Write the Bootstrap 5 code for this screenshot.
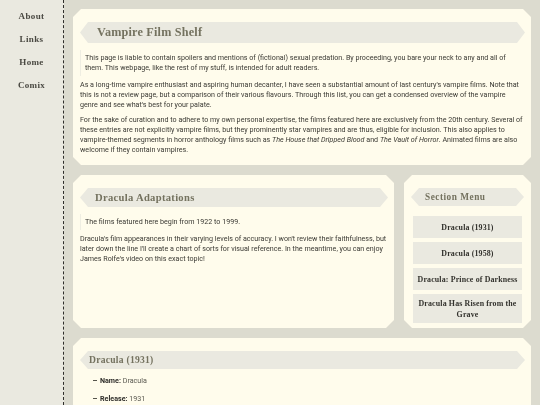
<!DOCTYPE html>
<html lang="en">
<head>
  <meta charset="UTF-8">
  <meta name="viewport" content="width=device-width, initial-scale=1.0">
  <link rel="stylesheet" href="https://cdn.jsdelivr.net/npm/bootstrap@5.3.6/dist/css/bootstrap.min.css">
  <script src="https://cdn.jsdelivr.net/npm/bootstrap@5.3.6/dist/js/bootstrap.bundle.min.js" defer></script>
  <title>Vampire Film Shelf</title>
  <style>
    html, body { height: 405px; overflow: hidden; }
    body { background: #dcdbcf; font-family: Roboto, "Liberation Sans", sans-serif; font-size: 7.15px; line-height: 9.9px; color: #3a3933; }
    .side-menu { width: 64px; height: 405px; flex: none; background: #eae9e0; border-right: 1.5px dashed #2f2e2a; padding-top: 10px; will-change: transform; }
    .side-menu a { display: block; height: 23px; line-height: 12px; text-align: center; font-family: "Liberation Serif", serif; font-size: 9px; font-weight: 700; letter-spacing: .35px; color: #4a4942; text-decoration: none; }
    .main-area { flex: 1; min-width: 0; padding: 9px 9px 0; gap: 10px; }
    .shelf-panel { background: #fffcec; padding: 13px 7px; will-change: transform; clip-path: polygon(8px 0, calc(100% - 8px) 0, 100% 8px, 100% calc(100% - 8px), calc(100% - 8px) 100%, 8px 100%, 0 calc(100% - 8px), 0 8px); }
    .panel-title { background: #eae9e0; color: #74725f; font-family: "Liberation Serif", serif; font-weight: 700; margin: 0 -1px 0 0; clip-path: polygon(8px 0, calc(100% - 8px) 0, 100% 50%, calc(100% - 8px) 100%, 8px 100%, 0 50%); }
    .title-big { height: 21px; line-height: 21px; font-size: 12.2px; padding-left: 17px; letter-spacing: .2px; }
    .title-mid { height: 19px; line-height: 19px; font-size: 10.6px; padding-left: 15px; letter-spacing: .3px; margin-bottom: 1px; }
    .title-small { height: 18px; line-height: 18px; font-size: 9.6px; padding-left: 9px; letter-spacing: .25px; }
    .title-menu { height: 18px; line-height: 18px; font-size: 9.3px; padding-left: 14px; letter-spacing: .5px; margin: 0; }
    .note-box { border-left: 1px solid #efeee2; padding: 3px 0 3px 4px; margin: 7px 0 4.5px; }
    .panel-text { margin: 0 0 5px; }
    .row-gap { gap: 10px; }
    .intro-panel { height: 156px; }
    .adapt-panel { width: 321px; flex: none; height: 153px; }
    .menu-panel { flex: 1; height: 153px; padding: 13px 7px 0; }
    .menu-list { margin: 10px 2px 0; gap: 4px; }
    .menu-entry { background: #eae9e0; color: #33322d; font-family: "Liberation Serif", serif; font-weight: 700; font-size: 7.9px; line-height: 11px; text-align: center; padding: 5.5px 3px; letter-spacing: .15px; }
    .menu-entry.two-line { padding: 3.5px 3px; }
    .film-panel { height: 200px; }
    .film-list { list-style: none; margin: 7px 0 0 13px; padding: 0; }
    .film-list li { margin-bottom: 8px; height: 10px; color: #5a5950; }
    .film-list li::before { content: ""; display: inline-block; width: 4px; height: 1px; background: #55544c; margin-right: 3px; vertical-align: 2.5px; }
    .film-list b { color: #2e2d29; font-weight: 700; }
  </style>
</head>
<body>
<div class="d-flex">
  <nav class="side-menu">
    <a href="#">About</a>
    <a href="#">Links</a>
    <a href="#">Home</a>
    <a href="#">Comix</a>
  </nav>
  <div class="main-area d-flex flex-column">
    <section class="shelf-panel intro-panel">
      <h1 class="panel-title title-big">Vampire Film Shelf</h1>
      <div class="note-box">This page is liable to contain spoilers and mentions of (fictional) sexual predation. By proceeding, you bare your neck to any and all of them. This webpage, like the rest of my stuff, is intended for adult readers.</div>
      <p class="panel-text">As a long-time vampire enthusiast and aspiring human decanter, I have seen a substantial amount of last century's vampire films. Note that this is not a review page, but a comparison of their various flavours. Through this list, you can get a condensed overview of the vampire genre and see what's best for your palate.</p>
      <p class="panel-text">For the sake of curation and to adhere to my own personal expertise, the films featured here are exclusively from the 20th century. Several of these entries are not explicitly vampire films, but they prominently star vampires and are thus, eligible for inclusion. This also applies to vampire-themed segments in horror anthology films such as <i>The House that Dripped Blood</i> and <i>The Vault of Horror</i>. Animated films are also welcome if they contain vampires.</p>
    </section>
    <div class="d-flex row-gap">
      <section class="shelf-panel adapt-panel">
        <h2 class="panel-title title-mid">Dracula Adaptations</h2>
        <div class="note-box">The films featured here begin from 1922 to 1999.</div>
        <p class="panel-text">Dracula's film appearances in their varying levels of accuracy. I won't review their faithfulness, but later down the line I'll create a chart of sorts for visual reference. In the meantime, you can enjoy James Rolfe's video on this exact topic!</p>
      </section>
      <section class="shelf-panel menu-panel">
        <h2 class="panel-title title-menu">Section Menu</h2>
        <div class="menu-list d-flex flex-column">
          <div class="menu-entry">Dracula (1931)</div>
          <div class="menu-entry">Dracula (1958)</div>
          <div class="menu-entry">Dracula: Prince of Darkness</div>
          <div class="menu-entry two-line">Dracula Has Risen from the Grave</div>
        </div>
      </section>
    </div>
    <section class="shelf-panel film-panel">
      <h3 class="panel-title title-small">Dracula (1931)</h3>
      <ul class="film-list">
        <li><b>Name:</b> Dracula</li>
        <li><b>Release:</b> 1931</li>
      </ul>
    </section>
  </div>
</div>
</body>
</html>
